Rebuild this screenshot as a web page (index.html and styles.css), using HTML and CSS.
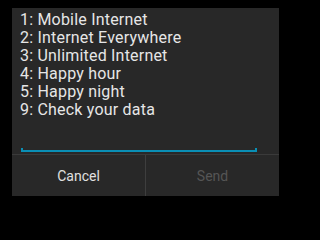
FILE: index.html
```html
<!DOCTYPE html>
<html>
<head>
<meta charset="utf-8">
<link rel="stylesheet" href="styles.css">
</head>
<body>
<div class="dialog">
  <div class="content">
    <div class="message">
      <div class="line">1: Mobile Internet</div>
      <div class="line">2: Internet Everywhere</div>
      <div class="line">3: Unlimited Internet</div>
      <div class="line">4: Happy hour</div>
      <div class="line">5: Happy night</div>
      <div class="line">9: Check your data</div>
    </div>
    <div class="field"></div>
  </div>
  <div class="buttons">
    <div class="btn">Cancel</div>
    <div class="btn btn-disabled">Send</div>
  </div>
</div>
</body>
</html>
```
FILE: styles.css
```css
html, body {
  margin: 0;
  padding: 0;
  background: #000;
  width: 300px;
  height: 200px;
  overflow: hidden;
}
.dialog {
  margin: 8px 0 0 12px;
  width: 267px;
  height: 188px;
  background: #282828;
  display: flex;
  flex-direction: column;
  font-family: Roboto, "Liberation Sans", sans-serif;
}
.content {
  flex: 1;
  padding: 3px 0 0 8px;
}
.message {
  color: #e6e6e6;
  font-size: 16px;
  line-height: 18px;
  letter-spacing: 0.2px;
}
.field {
  box-sizing: border-box;
  margin: 29px 0 0 1px;
  width: 236px;
  height: 4px;
  border-left: 2px solid #0a8fb5;
  border-right: 2px solid #0a8fb5;
  border-bottom: 2px solid #0a8fb5;
}
.buttons {
  display: flex;
  height: 41px;
  border-top: 1px solid #3a3a3a;
}
.btn {
  flex: 1;
  display: flex;
  align-items: center;
  justify-content: center;
  color: #e0e0e0;
  font-size: 14px;
}
.btn-disabled {
  color: #555;
  border-left: 1px solid #3e3e3e;
}
```
